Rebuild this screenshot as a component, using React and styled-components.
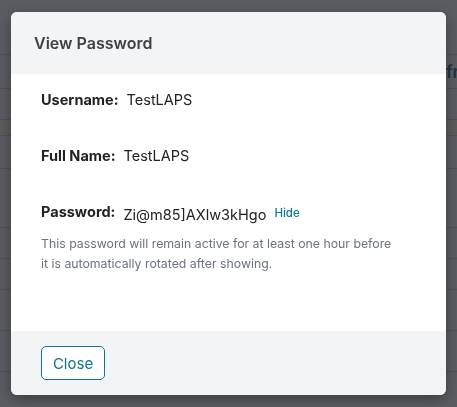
import React from "react";
import styled, { createGlobalStyle } from "styled-components";

const GlobalStyle = createGlobalStyle`
  html, body {
    margin: 0;
    padding: 0;
    background: #ffffff;
    font-family: Inter, "Liberation Sans", sans-serif;
  }
`;

const rows = [54, 33, 30, 15, 32, 58, 30, 30, 40, 40];

const Page = () => {
  return (
    <>
      <GlobalStyle />
      <Backdrop>
        <RowLink>Refr</RowLink>
        {rows.map((h, i) => (
          <Row key={i} $h={h} $tint={i === 3} />
        ))}
      </Backdrop>
      <Overlay>
        <Modal>
          <Header>
            <Title>View Password</Title>
          </Header>
          <Body>
            <Field>
              <Label>Username:</Label>
              <Value>TestLAPS</Value>
            </Field>
            <Field>
              <Label>Full Name:</Label>
              <Value>TestLAPS</Value>
            </Field>
            <Field $tight>
              <Label>Password:</Label>
              <Secret>Zi@m85]AXlw3kHgo</Secret>
              <HideLink>Hide</HideLink>
            </Field>
            <Note>
              This password will remain active for at least one hour before it
              is automatically rotated after showing.
            </Note>
          </Body>
          <Footer>
            <CloseButton>Close</CloseButton>
          </Footer>
        </Modal>
      </Overlay>
    </>
  );
};

const Backdrop = styled.div`
  position: relative;
  width: 457px;
  height: 407px;
  overflow: hidden;
`;

const RowLink = styled.span`
  position: absolute;
  left: 425px;
  top: 62px;
  font-size: 17px;
  font-weight: 600;
  color: #0e7490;
  white-space: nowrap;
`;

const Row = styled.div`
  height: ${(p) => p.$h}px;
  border-bottom: 1px solid #d1d5db;
  background: ${(p) => (p.$tint ? "#fefce8" : "transparent")};
`;

const Overlay = styled.div`
  position: fixed;
  inset: 0;
  background: rgba(30, 31, 38, 0.73);
  display: flex;
  align-items: flex-start;
  justify-content: center;
  padding-top: 12px;
`;

const Modal = styled.div`
  width: 435px;
  height: 383px;
  background: #ffffff;
  border-radius: 6px;
  overflow: hidden;
  display: flex;
  flex-direction: column;
  box-shadow: 0 4px 14px rgba(0, 0, 0, 0.35);
`;

const Header = styled.div`
  height: 62px;
  background: #f3f4f6;
  display: flex;
  align-items: center;
  padding: 0 23px;
  box-sizing: border-box;
`;

const Title = styled.h2`
  margin: 0;
  font-size: 16px;
  font-weight: 600;
  color: #3f3f46;
`;

const Body = styled.div`
  flex: 1;
  padding: 15px 30px 0;
`;

const Field = styled.div`
  display: flex;
  align-items: baseline;
  box-sizing: border-box;
  height: ${(p) => (p.$tight ? "28px" : "56px")};
  padding-top: 2px;
`;

const Label = styled.span`
  font-size: 14.5px;
  font-weight: 700;
  color: #222222;
  margin-right: 8px;
`;

const Value = styled.span`
  font-size: 14.5px;
  color: #222222;
`;

const Secret = styled.span`
  font-size: 14.5px;
  color: #222222;
  margin-right: 8px;
  position: relative;
  top: 3px;
`;

const HideLink = styled.span`
  font-size: 11.5px;
  font-weight: 500;
  color: #0e7490;
`;

const Note = styled.p`
  margin: 5px 0 0;
  max-width: 355px;
  font-size: 12.3px;
  line-height: 20px;
  color: #6b7280;
`;

const Footer = styled.div`
  height: 64px;
  background: #f3f4f6;
  display: flex;
  align-items: center;
  padding: 0 30px;
  box-sizing: border-box;
`;

const CloseButton = styled.button`
  width: 64px;
  height: 34px;
  border: 1px solid #0e7490;
  border-radius: 5px;
  background: #ffffff;
  color: #0e7490;
  font-family: Inter, "Liberation Sans", sans-serif;
  font-size: 15px;
  padding: 0;
`;

export default Page;
